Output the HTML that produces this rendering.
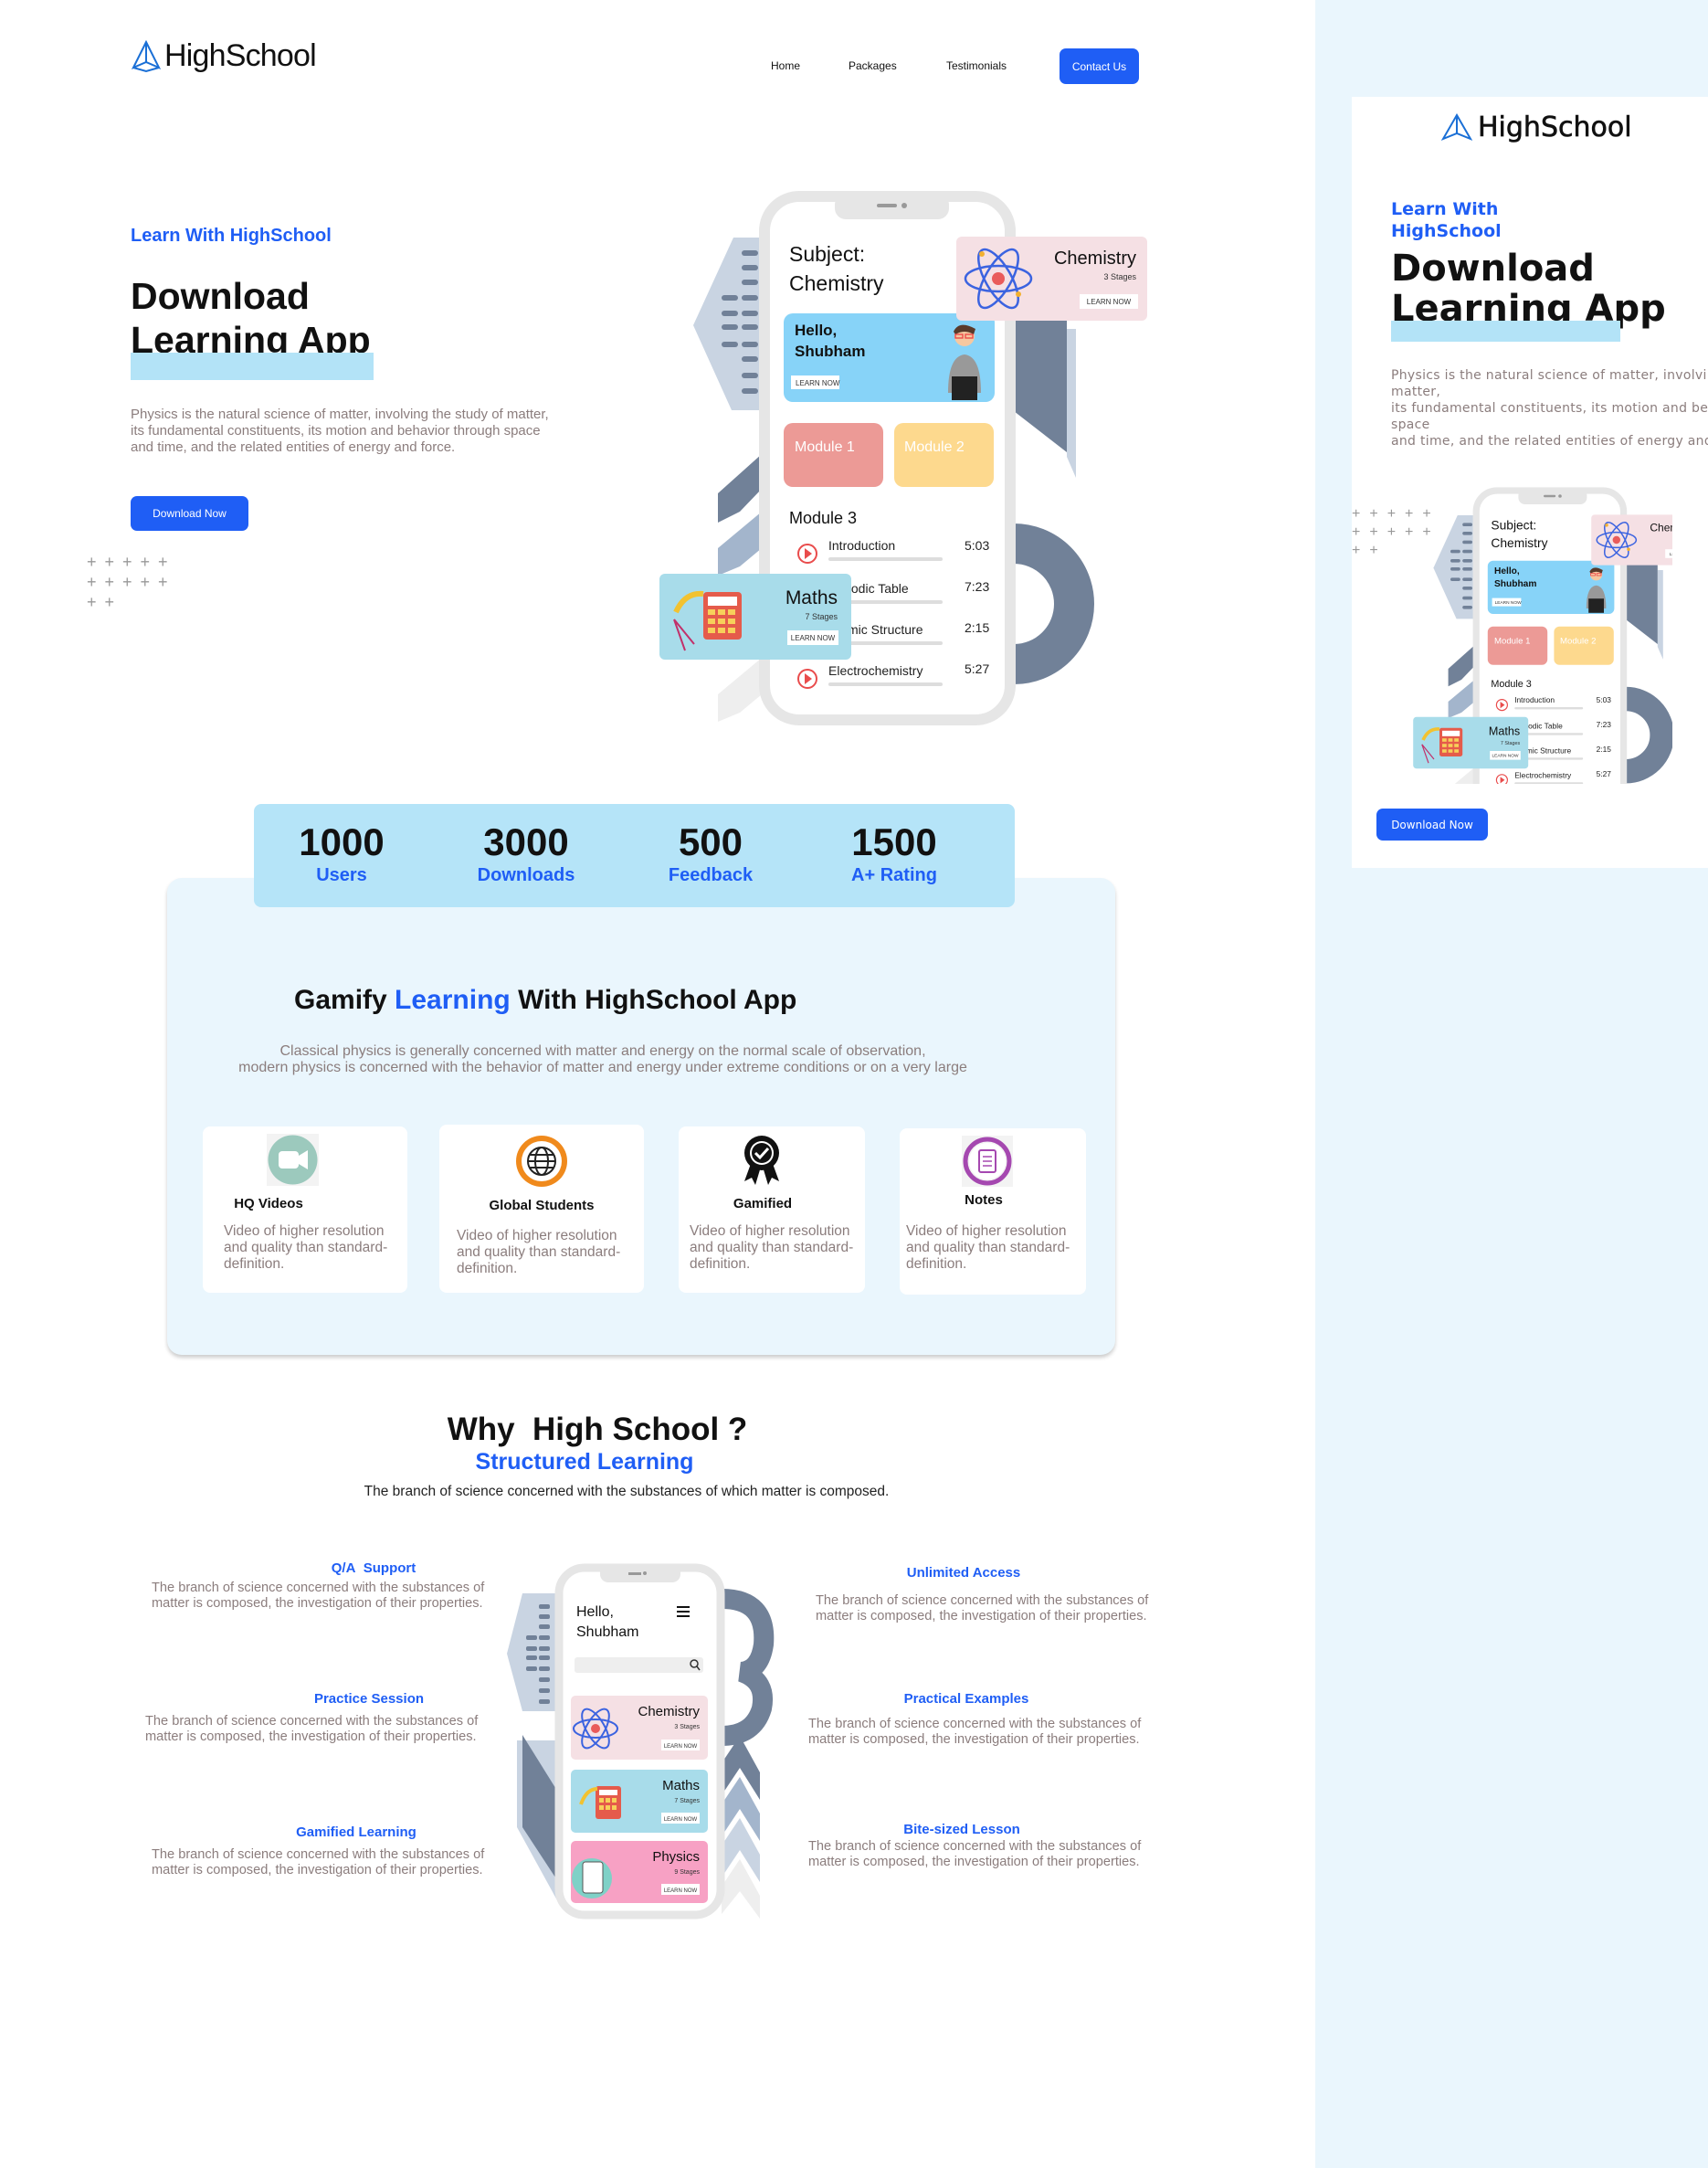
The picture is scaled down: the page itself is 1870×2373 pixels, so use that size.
<!DOCTYPE html>
<html><head><meta charset="utf-8">
<style>
*{margin:0;padding:0;box-sizing:border-box}
body{width:1870px;height:2373px;overflow:hidden;background:#fff;font-family:"Liberation Sans",Arial,sans-serif;position:relative}
.a{position:absolute}
.blue{color:#1f5ef5}
.gray{color:#8b7d7d}
.btn{background:#1f5ef5;color:#fff;border-radius:7px;font-size:12px;display:flex;align-items:center;justify-content:center}
.stat{position:absolute;top:0;width:200px;text-align:center}
.stat b{display:block;font-size:42px;font-weight:700;color:#111;margin-top:18px;line-height:48px}
.stat span{display:block;font-size:20px;font-weight:700;color:#1f5ef5;line-height:24px}
.card{position:absolute;background:#fff;border-radius:8px}
.card h4{position:absolute;font-size:15px;font-weight:700;color:#111;width:100%;text-align:center}
.card p{position:absolute;font-size:15.5px;line-height:18px;color:#8b7d7d;white-space:nowrap}
.ft{position:absolute;font-size:15px;font-weight:700;color:#1f5ef5;text-align:center}
.fd{position:absolute;font-size:14.6px;line-height:17px;color:#8b7d7d;text-align:left;white-space:nowrap}
.ph text{font-family:"Liberation Sans",sans-serif}
</style></head><body>

<!-- right panel -->
<div class="a" style="left:1440px;top:0;width:430px;height:2373px;background:#eaf6fd"></div>
<div class="a" style="left:1480px;top:106px;width:390px;height:844px;background:#fff;overflow:hidden">
  <div class="a" style="left:98px;top:16px;font-family:'DejaVu Sans',sans-serif;font-size:30px;color:#111;white-space:nowrap;display:flex;align-items:center;-webkit-text-stroke:0.6px #111">
    <svg width="34" height="32" viewBox="0 0 34 32" style="margin-right:6px"><path d="M17 2 L2 28 L17 22 L32 28 Z M17 2 L17 22" fill="none" stroke="#1a6fd6" stroke-width="2"/></svg>HighSchool</div>
  <div class="a blue" style="left:43px;top:111px;font-family:'DejaVu Sans',sans-serif;font-weight:700;font-size:19px;line-height:24px">Learn With<br>HighSchool</div>
  <div class="a" style="left:43px;top:166px;font-family:'DejaVu Sans',sans-serif;font-weight:700;font-size:40px;line-height:44px;color:#111;white-space:nowrap">Download<br>Learning App</div>
  <div class="a" style="left:43px;top:245px;width:251px;height:23px;background:#b3e3f7"></div>
  <div class="a gray" style="left:43px;top:296px;font-family:'DejaVu Sans',sans-serif;font-size:14px;line-height:18px;white-space:nowrap;letter-spacing:.3px">Physics is the natural science of matter, involving the study of<br>matter,<br>its fundamental constituents, its motion and behavior through<br>space<br>and time, and the related entities of energy and force.</div>
  <div class="a" style="left:0;top:447px;color:#999;font-size:16px;line-height:20px;letter-spacing:10px">+++++<br>+++++<br>++</div>
  <div class="a" style="left:0;top:424px;width:351px;height:328px;overflow:hidden">
    <div class="a" style="left:66px;top:-2px;width:540px;height:600px;transform:scale(.6);transform-origin:0 0" id="mini"></div>
  </div>
  <div class="a btn" style="left:27px;top:779px;width:122px;height:35px;font-size:12px;font-family:'DejaVu Sans',sans-serif">Download Now</div>
</div>

<!-- header -->
<div class="a" style="left:143px;top:42px;display:flex;align-items:center;font-size:34px;color:#111;letter-spacing:-0.8px">
  <svg width="34" height="36" viewBox="0 0 34 36" style="margin-right:3px"><path d="M17 2 L3 30 L17 24 L31 30 Z M17 2 L17 24 M3 30 L17 34 L31 30" fill="none" stroke="#1a6fd6" stroke-width="2"/></svg>HighSchool</div>
<div class="a" style="left:844px;top:65px;font-size:12px;color:#111">Home</div>
<div class="a" style="left:929px;top:65px;font-size:12px;color:#111">Packages</div>
<div class="a" style="left:1036px;top:65px;font-size:12px;color:#111">Testimonials</div>
<div class="a btn" style="left:1160px;top:53px;width:87px;height:39px">Contact Us</div>

<!-- hero text -->
<div class="a blue" style="left:143px;top:247px;font-size:20px;font-weight:700">Learn With HighSchool</div>
<div class="a" style="left:143px;top:300px;font-size:41px;font-weight:700;line-height:48px;color:#111">Download<br>Learning App</div>
<div class="a" style="left:143px;top:386px;width:266px;height:30px;background:#b3e3f7"></div>
<div class="a gray" style="left:143px;top:445px;font-size:15px;line-height:18px;white-space:nowrap">Physics is the natural science of matter, involving the study of matter,<br>its fundamental constituents, its motion and behavior through space<br>and time, and the related entities of energy and force.</div>
<div class="a btn" style="left:143px;top:543px;width:129px;height:38px">Download Now</div>
<div class="a" style="left:95px;top:604px;color:#999;font-size:18px;line-height:22px;letter-spacing:9px">+++++<br>+++++<br>++</div>

<!-- hero illustration -->
<div class="a" style="left:720px;top:200px;width:540px;height:600px" id="hero">
<svg class="ph" width="540" height="600" viewBox="0 0 540 600">
 <polygon points="83,60 114,60 114,249 81,249 39,156" fill="#c9d4e2"/>
 <g fill="#718198">
  <rect x="92" y="74" width="18" height="6" rx="3"/><rect x="92" y="90" width="18" height="6" rx="3"/><rect x="92" y="106" width="18" height="6" rx="3"/>
  <rect x="92" y="123" width="18" height="6" rx="3"/><rect x="70" y="123" width="18" height="6" rx="3"/>
  <rect x="92" y="140" width="18" height="6" rx="3"/><rect x="70" y="140" width="18" height="6" rx="3"/>
  <rect x="92" y="155" width="18" height="6" rx="3"/><rect x="70" y="155" width="18" height="6" rx="3"/>
  <rect x="92" y="174" width="18" height="6" rx="3"/><rect x="70" y="174" width="18" height="6" rx="3"/>
  <rect x="92" y="190" width="18" height="6" rx="3"/><rect x="92" y="208" width="18" height="6" rx="3"/><rect x="92" y="225" width="18" height="6" rx="3"/>
 </g>
 <polygon points="66,340 114,297 114,335 90,360 66,372" fill="#718198"/>
 <polygon points="66,400 114,360 114,400 90,420 66,430" fill="#a3b5cc"/>
 <polygon points="66,480 114,440 114,480 90,500 66,510" fill="#c9d4e2"/>
 <polygon points="66,560 114,520 114,560 90,580 66,590" fill="#eeeeee"/>
 <polygon points="448,160 458,160 458,323 448,300" fill="#c9d4e2"/>
 <polygon points="390,150 448,150 448,295 390,250" fill="#718198"/>
 <circle cx="390" cy="461" r="66" fill="none" stroke="#718198" stroke-width="44"/>
 <rect x="117" y="15" width="269" height="573" rx="38" fill="#fff" stroke="#e6e6e6" stroke-width="12"/>
 <rect x="194" y="12" width="125" height="28" rx="12" fill="#e6e6e6"/>
 <rect x="240" y="23" width="22" height="4" rx="2" fill="#999"/><circle cx="270" cy="25" r="3" fill="#999"/>
 <text x="144" y="86" font-size="23" fill="#111">Subject:</text>
 <text x="144" y="118" font-size="23" fill="#111">Chemistry</text>
 <rect x="138" y="143" width="231" height="97" rx="10" fill="#87d3f8"/>
 <text x="150" y="167" font-size="17" font-weight="700" fill="#111">Hello,</text>
 <text x="150" y="190" font-size="17" font-weight="700" fill="#111">Shubham</text>
 <rect x="146" y="211" width="53" height="15" fill="#fff"/><text x="151" y="222" font-size="8" fill="#333">LEARN NOW</text>
 <circle cx="336" cy="168" r="11" fill="#f6c8a0"/><path d="M324 163 Q330 150 348 160 L346 166 Q336 160 326 166Z" fill="#5a3a2a"/>
 <rect x="326" y="166" width="8" height="4" fill="none" stroke="#e44" stroke-width="1.3"/><rect x="337" y="166" width="8" height="4" fill="none" stroke="#e44" stroke-width="1.3"/>
 <path d="M318 230 Q318 190 336 188 Q354 190 354 230Z" fill="#999"/><rect x="322" y="212" width="28" height="26" fill="#222"/>
 <rect x="138" y="263" width="109" height="70" rx="10" fill="#ec9a96"/><text x="150" y="294" font-size="16" fill="#fff">Module 1</text>
 <rect x="259" y="263" width="109" height="70" rx="10" fill="#fdd98e"/><text x="270" y="294" font-size="16" fill="#fff">Module 2</text>
 <text x="144" y="373" font-size="18" fill="#111">Module 3</text>
 <g font-size="14" fill="#222">
  <circle cx="164" cy="406" r="10" fill="none" stroke="#e94c4c" stroke-width="2"/><path d="M161 400 L169 406 L161 412Z" fill="#e94c4c"/>
  <text x="187" y="402">Introduction</text><text x="336" y="402">5:03</text><rect x="187" y="410" width="125" height="4" rx="2" fill="#ddd"/>
  <text x="187" y="449">Periodic Table</text><text x="336" y="447">7:23</text><rect x="187" y="457" width="125" height="4" rx="2" fill="#ddd"/>
  <text x="187" y="494">Atomic Structure</text><text x="336" y="492">2:15</text><rect x="187" y="502" width="125" height="4" rx="2" fill="#ddd"/>
  <circle cx="164" cy="543" r="10" fill="none" stroke="#e94c4c" stroke-width="2"/><path d="M161 537 L169 543 L161 549Z" fill="#e94c4c"/>
  <text x="187" y="539">Electrochemistry</text><text x="336" y="537">5:27</text><rect x="187" y="547" width="125" height="4" rx="2" fill="#ddd"/>
 </g>
 <rect x="327" y="59" width="209" height="92" rx="6" fill="#f5e0e4"/>
 <g fill="none" stroke="#3b63e0" stroke-width="2.5"><ellipse cx="373" cy="105" rx="36" ry="14"/><ellipse cx="373" cy="105" rx="36" ry="14" transform="rotate(60 373 105)"/><ellipse cx="373" cy="105" rx="36" ry="14" transform="rotate(-60 373 105)"/></g>
 <circle cx="373" cy="105" r="7" fill="#e95b5b"/><circle cx="355" cy="78" r="3" fill="#f2b030"/><circle cx="395" cy="122" r="3" fill="#f2b030"/>
 <text x="524" y="89" font-size="20" fill="#111" text-anchor="end">Chemistry</text>
 <text x="524" y="106" font-size="9" fill="#333" text-anchor="end">3 Stages</text>
 <rect x="462" y="122" width="64" height="16" fill="#fff"/><text x="494" y="133" font-size="8" fill="#333" text-anchor="middle">LEARN NOW</text>
 <rect x="2" y="428" width="210" height="94" rx="6" fill="#a8dcea"/>
 <rect x="50" y="448" width="42" height="52" rx="4" fill="#e55b4b"/><rect x="55" y="453" width="32" height="10" fill="#fff"/>
 <g fill="#f7d05a"><rect x="55" y="467" width="8" height="6"/><rect x="66" y="467" width="8" height="6"/><rect x="77" y="467" width="8" height="6"/><rect x="55" y="477" width="8" height="6"/><rect x="66" y="477" width="8" height="6"/><rect x="77" y="477" width="8" height="6"/><rect x="55" y="487" width="8" height="6"/><rect x="66" y="487" width="8" height="6"/><rect x="77" y="487" width="8" height="6"/></g>
 <path d="M20 470 Q30 448 50 450" fill="none" stroke="#f2c230" stroke-width="6"/>
 <path d="M18 478 L30 512 M18 478 L40 505" stroke="#c2306a" stroke-width="2"/>
 <text x="197" y="461" font-size="21" fill="#111" text-anchor="end">Maths</text>
 <text x="197" y="478" font-size="9" fill="#333" text-anchor="end">7 Stages</text>
 <rect x="142" y="490" width="56" height="16" fill="#fff"/><text x="170" y="501" font-size="8" fill="#333" text-anchor="middle">LEARN NOW</text>
</svg>
</div>

<!-- stats -->
<div class="a" style="left:183px;top:961px;width:1038px;height:522px;background:#eaf6fd;border-radius:16px;box-shadow:0 3px 4px rgba(0,0,0,.2)"></div>
<div class="a" style="left:278px;top:880px;width:833px;height:113px;background:#b5e4f8;border-radius:8px">
  <div class="stat" style="left:-4px"><b>1000</b><span>Users</span></div>
  <div class="stat" style="left:198px"><b>3000</b><span>Downloads</span></div>
  <div class="stat" style="left:400px"><b>500</b><span>Feedback</span></div>
  <div class="stat" style="left:601px"><b>1500</b><span>A+ Rating</span></div>
</div>

<div class="a" style="left:322px;top:1078px;font-size:30px;font-weight:700;color:#111">Gamify <span class="blue">Learning</span> With HighSchool App</div>
<div class="a gray" style="left:180px;top:1142px;width:960px;text-align:center;font-size:16px;line-height:18px">Classical physics is generally concerned with matter and energy on the normal scale of observation,<br>modern physics is concerned with the behavior of matter and energy under extreme conditions or on a very large</div>

<div class="card" style="left:222px;top:1233px;width:224px;height:182px">
  <svg class="a" style="left:70px;top:8px" width="57" height="57" viewBox="0 0 57 57"><rect width="57" height="57" fill="#f3f3f3"/><circle cx="28.5" cy="28.5" r="27" fill="#9cc9bd"/><rect x="13" y="19" width="22" height="19" rx="4" fill="#fff"/><path d="M35 24 L45 18 L45 39 L35 33Z" fill="#fff"/></svg>
  <h4 style="top:76px;left:-40px">HQ Videos</h4>
  <p style="left:23px;top:106px">Video of higher resolution<br>and quality than standard-<br>definition.</p>
</div>
<div class="card" style="left:481px;top:1231px;width:224px;height:184px">
  <svg class="a" style="left:82px;top:10px" width="60" height="60" viewBox="0 0 60 60"><circle cx="30" cy="30" r="28" fill="#f08a1c"/><circle cx="30" cy="30" r="22" fill="#fff"/><circle cx="30" cy="30" r="15" fill="none" stroke="#222" stroke-width="2"/><ellipse cx="30" cy="30" rx="7" ry="15" fill="none" stroke="#222" stroke-width="2"/><path d="M15 30 H45 M17 23 H43 M17 37 H43" stroke="#222" stroke-width="2"/></svg>
  <h4 style="top:80px">Global Students</h4>
  <p style="left:19px;top:113px">Video of higher resolution<br>and quality than standard-<br>definition.</p>
</div>
<div class="card" style="left:743px;top:1233px;width:204px;height:182px">
  <svg class="a" style="left:68px;top:8px" width="46" height="58" viewBox="0 0 46 58"><path d="M12 30 L4 52 L12 48 L16 56 L22 36Z M34 30 L42 52 L34 48 L30 56 L24 36Z" fill="#111"/><circle cx="23" cy="21" r="19" fill="#111"/><circle cx="23" cy="21" r="13" fill="#fff"/><circle cx="23" cy="21" r="11" fill="#111"/><path d="M16 21 L21 26 L30 16" stroke="#fff" stroke-width="3" fill="none"/></svg>
  <h4 style="top:76px;left:-10px">Gamified</h4>
  <p style="left:12px;top:106px">Video of higher resolution<br>and quality than standard-<br>definition.</p>
</div>
<div class="card" style="left:985px;top:1235px;width:204px;height:182px">
  <svg class="a" style="left:68px;top:8px" width="56" height="56" viewBox="0 0 56 56"><rect width="56" height="56" fill="#f3f3f3"/><circle cx="28" cy="28" r="24" fill="none" stroke="#a548b0" stroke-width="5"/><circle cx="28" cy="28" r="20" fill="#fff"/><rect x="19" y="16" width="18" height="24" rx="2" fill="none" stroke="#a548b0" stroke-width="2"/><path d="M23 23 H33 M23 28 H33 M23 33 H33" stroke="#a548b0" stroke-width="1.5"/></svg>
  <h4 style="top:70px;left:-10px">Notes</h4>
  <p style="left:7px;top:104px">Video of higher resolution<br>and quality than standard-<br>definition.</p>
</div>

<!-- why -->
<div class="a" style="left:0;top:1545px;width:1308px;text-align:center;font-size:35px;font-weight:700;color:#111">Why&nbsp; High School ?</div>
<div class="a blue" style="left:0;top:1586px;width:1280px;text-align:center;font-size:25px;font-weight:700">Structured Learning</div>
<div class="a" style="left:0;top:1624px;width:1372px;text-align:center;font-size:15.5px;color:#222">The branch of science concerned with the substances of which matter is composed.</div>

<div class="ft" style="left:309px;top:1708px;width:200px">Q/A&nbsp; Support</div>
<div class="fd" style="left:166px;top:1730px">The branch of science concerned with the substances of<br>matter is composed, the investigation of their properties.</div>
<div class="ft" style="left:304px;top:1851px;width:200px">Practice Session</div>
<div class="fd" style="left:159px;top:1876px">The branch of science concerned with the substances of<br>matter is composed, the investigation of their properties.</div>
<div class="ft" style="left:290px;top:1997px;width:200px">Gamified Learning</div>
<div class="fd" style="left:166px;top:2022px">The branch of science concerned with the substances of<br>matter is composed, the investigation of their properties.</div>
<div class="ft" style="left:955px;top:1713px;width:200px">Unlimited Access</div>
<div class="fd" style="left:893px;top:1744px">The branch of science concerned with the substances of<br>matter is composed, the investigation of their properties.</div>
<div class="ft" style="left:958px;top:1851px;width:200px">Practical Examples</div>
<div class="fd" style="left:885px;top:1879px">The branch of science concerned with the substances of<br>matter is composed, the investigation of their properties.</div>
<div class="ft" style="left:953px;top:1994px;width:200px">Bite-sized Lesson</div>
<div class="fd" style="left:885px;top:2013px">The branch of science concerned with the substances of<br>matter is composed, the investigation of their properties.</div>

<div class="a" style="left:540px;top:1700px;width:320px;height:410px">
<svg class="ph" width="320" height="410" viewBox="0 0 320 410">
 <polygon points="32,44 70,44 70,173 32,173 15,110" fill="#c9d4e2"/>
 <g fill="#718198">
  <rect x="50" y="56" width="12" height="5" rx="2"/><rect x="50" y="67" width="12" height="5" rx="2"/><rect x="50" y="78" width="12" height="5" rx="2"/>
  <rect x="50" y="90" width="12" height="5" rx="2"/><rect x="36" y="90" width="12" height="5" rx="2"/>
  <rect x="50" y="102" width="12" height="5" rx="2"/><rect x="36" y="102" width="12" height="5" rx="2"/>
  <rect x="50" y="112" width="12" height="5" rx="2"/><rect x="36" y="112" width="12" height="5" rx="2"/>
  <rect x="50" y="124" width="12" height="5" rx="2"/><rect x="36" y="124" width="12" height="5" rx="2"/>
  <rect x="50" y="136" width="12" height="5" rx="2"/><rect x="50" y="148" width="12" height="5" rx="2"/><rect x="50" y="160" width="12" height="5" rx="2"/>
 </g>
 <polygon points="26,205 70,205 70,380 26,300" fill="#c9d4e2"/>
 <polygon points="32,199 70,260 70,358 32,300" fill="#718198"/>
 <path d="M250 50 Q300 50 296 100 Q292 128 272 130 Q300 140 294 170 Q285 200 250 200" fill="none" stroke="#718198" stroke-width="22"/>
 <polygon points="250,230 270,200 292,240 292,270 270,235 250,265" fill="#718198"/>
 <polygon points="250,275 270,245 292,285 292,315 270,280 250,310" fill="#a3b5cc"/>
 <polygon points="250,320 270,290 292,330 292,360 270,325 250,355" fill="#c9d4e2"/>
 <polygon points="250,365 270,335 292,375 292,400 270,370 250,395" fill="#eeeeee"/>
 <rect x="72" y="16" width="177" height="380" rx="28" fill="#fff" stroke="#e6e6e6" stroke-width="9"/>
 <rect x="117" y="12" width="88" height="20" rx="9" fill="#e6e6e6"/>
 <rect x="148" y="21" width="14" height="3" fill="#999"/><circle cx="166" cy="22" r="2" fill="#999"/>
 <text x="91" y="69" font-size="16" fill="#111">Hello,</text>
 <text x="91" y="91" font-size="16" fill="#111">Shubham</text>
 <path d="M201 59 H215 M201 64 H215 M201 69 H215" stroke="#111" stroke-width="2"/>
 <rect x="89" y="114" width="141" height="17" rx="3" fill="#eee"/>
 <circle cx="220" cy="121" r="4" fill="none" stroke="#333" stroke-width="1.5"/><path d="M223 124 L226 128" stroke="#333" stroke-width="1.5"/>
 <rect x="85" y="156" width="150" height="70" rx="5" fill="#f5e0e4"/>
 <g fill="none" stroke="#3b63e0" stroke-width="2"><ellipse cx="112" cy="192" rx="24" ry="10"/><ellipse cx="112" cy="192" rx="24" ry="10" transform="rotate(60 112 192)"/><ellipse cx="112" cy="192" rx="24" ry="10" transform="rotate(-60 112 192)"/></g>
 <circle cx="112" cy="192" r="5" fill="#e95b5b"/>
 <text x="226" y="178" font-size="15" fill="#111" text-anchor="end">Chemistry</text>
 <text x="226" y="192" font-size="7" fill="#333" text-anchor="end">3 Stages</text>
 <rect x="184" y="204" width="42" height="12" fill="#fff"/><text x="205" y="213" font-size="6" fill="#333" text-anchor="middle">LEARN NOW</text>
 <rect x="85" y="237" width="150" height="69" rx="5" fill="#a8dcea"/>
 <rect x="112" y="255" width="28" height="36" rx="3" fill="#e55b4b"/><rect x="116" y="259" width="20" height="6" fill="#fff"/>
 <g fill="#f7d05a"><rect x="116" y="268" width="5" height="5"/><rect x="123" y="268" width="5" height="5"/><rect x="130" y="268" width="5" height="5"/><rect x="116" y="276" width="5" height="5"/><rect x="123" y="276" width="5" height="5"/><rect x="130" y="276" width="5" height="5"/></g>
 <path d="M96 275 Q102 258 114 258" fill="none" stroke="#f2c230" stroke-width="4"/>
 <text x="226" y="259" font-size="15" fill="#111" text-anchor="end">Maths</text>
 <text x="226" y="273" font-size="7" fill="#333" text-anchor="end">7 Stages</text>
 <rect x="184" y="284" width="42" height="12" fill="#fff"/><text x="205" y="293" font-size="6" fill="#333" text-anchor="middle">LEARN NOW</text>
 <rect x="85" y="315" width="150" height="68" rx="5" fill="#f7a1c4"/>
 <circle cx="108" cy="356" r="22" fill="#7fd1c7"/><rect x="98" y="338" width="22" height="34" rx="3" fill="#fff" stroke="#555"/>
 <text x="226" y="337" font-size="15" fill="#111" text-anchor="end">Physics</text>
 <text x="226" y="351" font-size="7" fill="#333" text-anchor="end">9 Stages</text>
 <rect x="184" y="362" width="42" height="12" fill="#fff"/><text x="205" y="371" font-size="6" fill="#333" text-anchor="middle">LEARN NOW</text>
</svg>
</div>

<script>
document.getElementById('mini').innerHTML=document.getElementById('hero').innerHTML;
</script>
</body></html>
